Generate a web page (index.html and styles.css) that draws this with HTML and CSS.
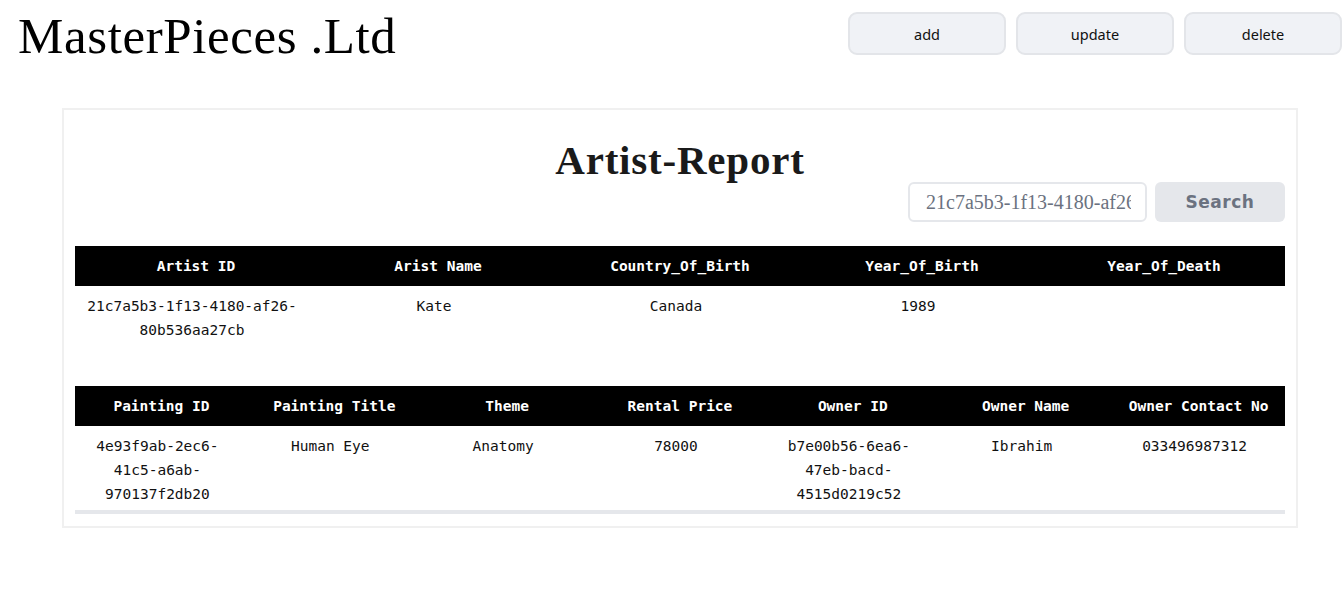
FILE: index.html
```html
<!DOCTYPE html>
<html>
<head>
<meta charset="utf-8">
<title>MasterPieces .Ltd</title>
<link rel="stylesheet" href="styles.css">
</head>
<body>
<header class="topbar">
  <h1 class="brand">MasterPieces .Ltd</h1>
  <nav class="actions">
    <button class="action-btn">add</button>
    <button class="action-btn">update</button>
    <button class="action-btn">delete</button>
  </nav>
</header>
<main class="report-card">
  <h2 class="report-title">Artist-Report</h2>
  <div class="search-row">
    <input class="search-input" type="text" value="21c7a5b3-1f13-4180-af26-80b536aa27cb">
    <button class="search-btn">Search</button>
  </div>
  <table class="data-table artist-table">
    <thead>
      <tr><th>Artist ID</th><th>Arist Name</th><th>Country_Of_Birth</th><th>Year_Of_Birth</th><th>Year_Of_Death</th></tr>
    </thead>
    <tbody>
      <tr><td>21c7a5b3-1f13-4180-af26-80b536aa27cb</td><td>Kate</td><td>Canada</td><td>1989</td><td></td></tr>
    </tbody>
  </table>
  <table class="data-table painting-table">
    <thead>
      <tr><th>Painting ID</th><th>Painting Title</th><th>Theme</th><th>Rental Price</th><th>Owner ID</th><th>Owner Name</th><th>Owner Contact No</th></tr>
    </thead>
    <tbody>
      <tr><td>4e93f9ab-2ec6-41c5-a6ab-970137f2db20</td><td>Human Eye</td><td>Anatomy</td><td>78000</td><td>b7e00b56-6ea6-47eb-bacd-4515d0219c52</td><td>Ibrahim</td><td>033496987312</td></tr>
    </tbody>
  </table>
</main>
</body>
</html>
```
FILE: styles.css
```css
* { box-sizing: border-box; }
body {
  margin: 0;
  background: #ffffff;
  color: #000;
  font-family: "Liberation Serif", serif;
}
.topbar {
  display: flex;
  justify-content: space-between;
  align-items: flex-start;
  padding-left: 18px;
  height: 108px;
}
.brand {
  margin: 8px 0 0 0;
  font-family: "Liberation Serif", serif;
  font-weight: normal;
  font-size: 51px;
  line-height: 56px;
  letter-spacing: 0.6px;
}
.actions {
  display: flex;
  gap: 10px;
  margin-top: 12px;
}
.action-btn {
  width: 158px;
  height: 43px;
  background: #f0f2f6;
  border: 2px solid #e3e5e9;
  border-radius: 9px;
  font-family: "Noto Sans", "Open Sans", sans-serif;
  font-size: 14.5px;
  color: #111;
}
.report-card {
  margin-left: 62px;
  width: 1236px;
  border: 2px solid #f0f0f0;
  padding: 28px 11px 12px 11px;
}
.report-title {
  margin: 0;
  text-align: center;
  font-family: "Liberation Serif", serif;
  font-weight: bold;
  font-size: 41px;
  line-height: 44px;
  letter-spacing: 0.8px;
  color: #1a1a1a;
}
.search-row {
  display: flex;
  justify-content: flex-end;
  gap: 8px;
  margin-top: 0;
  margin-bottom: 24px;
}
.search-input {
  width: 239px;
  height: 40px;
  border: 2px solid #e5e7eb;
  border-radius: 6px;
  padding: 0 14px 0 16px;
  font-family: "Liberation Serif", serif;
  font-size: 20px;
  color: #6b7280;
  outline: none;
}
.search-btn {
  width: 130px;
  height: 40px;
  background: #e5e7eb;
  border: none;
  border-radius: 6px;
  font-family: "DejaVu Sans", sans-serif;
  font-weight: bold;
  font-size: 17px;
  color: #6b7280;
  letter-spacing: 0.5px;
}
.data-table {
  width: 100%;
  border-collapse: collapse;
  table-layout: fixed;
  font-family: "DejaVu Sans Mono", monospace;
  font-size: 14.5px;
}
.data-table th {
  background: #000;
  color: #fff;
  font-weight: bold;
  height: 40px;
  padding: 0 4px;
  text-align: center;
}
.data-table td {
  text-align: center;
  vertical-align: top;
  padding: 8px 12px 8px 4px;
  line-height: 24px;
  color: #111;
}
.artist-table { margin-bottom: 36px; }
.painting-table { border-bottom: 4px solid #e5e7eb; }
.painting-table td { padding: 8px 18px 4px 10px; }
```
